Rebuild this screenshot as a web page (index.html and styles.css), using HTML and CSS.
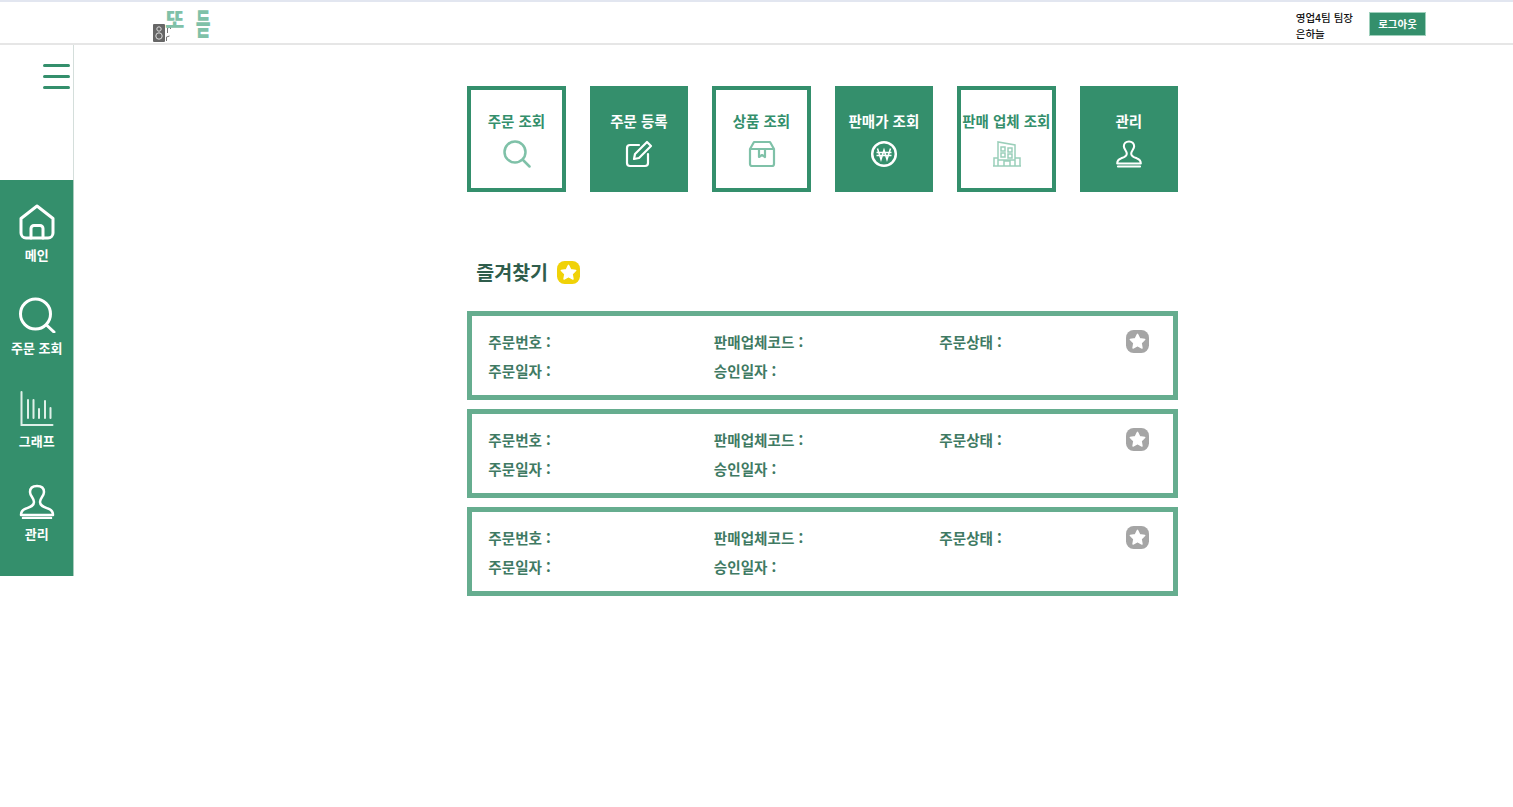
FILE: index.html
```html
<!DOCTYPE html>
<html lang="ko">
<head>
  <meta charset="UTF-8" />
  <title>또듣</title>
  <link rel="stylesheet" href="styles.css">
</head>
<body>
  <header class="topbar">
    <div class="logo">
      <svg class="logo-speaker" width="20" height="18" viewBox="0 0 20 18">
        <rect x="0" y="0" width="12" height="18" rx="1" fill="#666"/>
        <circle cx="6" cy="5" r="2.200" fill="none" stroke="#ddd" stroke-width="1"/>
        <circle cx="6" cy="12" r="3.200" fill="none" stroke="#ddd" stroke-width="1"/>
        <path d="M14.500 9V4l3-1v2M13.500 17v-4l3-1" fill="none" stroke="#777" stroke-width="1"/>
      </svg>
      <span class="logo-a">또</span>
      <span class="logo-b">듣</span>
    </div>
    <div class="user">
      <div class="user-name">영업4팀 팀장<br>은하늘</div>
      <button class="logout-btn">로그아웃</button>
    </div>
  </header>

  <div class="layout">
    <aside class="sidebar">
      <div class="menu-toggle">
        <div class="burger"><span></span><span></span><span></span></div>
      </div>
      <nav class="side-nav">
        <a class="side-item">
          <svg width="38" height="36" viewBox="0 0 38 36" fill="none" stroke="#fff" stroke-width="3" stroke-linejoin="round" stroke-linecap="round">
            <path d="M3 14.500 19 2l16 12.500V29a5 5 0 0 1-5 5H8a5 5 0 0 1-5-5z"/>
            <path d="M13 34V24.500a3 3 0 0 1 3-3h6a3 3 0 0 1 3 3V34"/>
          </svg>
          <span>메인</span>
        </a>
        <a class="side-item">
          <svg width="38" height="36" viewBox="0 0 38 36" fill="none" stroke="#fff" stroke-width="3" stroke-linecap="round">
            <circle cx="17.500" cy="17" r="15"/>
            <path d="M29 28.500l7 6.500"/>
          </svg>
          <span>주문 조회</span>
        </a>
        <a class="side-item">
          <svg width="38" height="36" viewBox="0 0 38 36" fill="none" stroke="#dff0e8" stroke-width="2" stroke-linecap="round">
            <path d="M3.500 2v33h31"/>
            <path d="M10 10v18M15.500 10v18M21 19v9M27 11v17M32.500 18v10"/>
          </svg>
          <span>그래프</span>
        </a>
        <a class="side-item">
          <svg width="38" height="36" viewBox="0 0 38 36" fill="none" stroke="#fff" stroke-width="2.500" stroke-linejoin="round" stroke-linecap="round">
            <path d="M19 3c-4 0-7 2-7 6 0 4 4 6 4 10 0 4-4 5-8 6.500-3 1-5 3-5 6.500h32c0-3.500-2-5.500-5-6.500-4-1.500-8-2.500-8-6.500 0-4 4-6 4-10 0-4-3-6-7-6z"/>
            <path d="M5 35h28"/>
          </svg>
          <span>관리</span>
        </a>
      </nav>
    </aside>

    <main class="content">
      <div class="tiles">
        <a class="tile">
          <span>주문 조회</span>
          <svg width="28" height="28" viewBox="0 0 28 28" fill="none" stroke="#7fc1a8" stroke-width="2.500" stroke-linecap="round">
            <circle cx="12" cy="12" r="10.500"/>
            <path d="M20 20l6.500 6.500"/>
          </svg>
        </a>
        <a class="tile tile-fill">
          <span>주문 등록</span>
          <svg width="28" height="28" viewBox="0 0 28 28" fill="none" stroke="#fff" stroke-width="2.200" stroke-linejoin="round" stroke-linecap="round">
            <path d="M14 5H5a3 3 0 0 0-3 3v15a3 3 0 0 0 3 3h15a3 3 0 0 0 3-3v-9"/>
            <path d="M22 2l4 4-12 12-5 1 1-5z"/>
          </svg>
        </a>
        <a class="tile">
          <span>상품 조회</span>
          <svg width="28" height="28" viewBox="0 0 28 28" fill="none" stroke="#7fc1a8" stroke-width="2.200" stroke-linejoin="round">
            <path d="M2 9l4-7h16l4 7v15a2 2 0 0 1-2 2H4a2 2 0 0 1-2-2z"/>
            <path d="M2 9h24M11 9v8l3-2 3 2V9"/>
          </svg>
        </a>
        <a class="tile tile-fill">
          <span>판매가 조회</span>
          <svg width="28" height="28" viewBox="0 0 28 28" fill="none" stroke="#fff" stroke-width="2.500">
            <circle cx="14" cy="14" r="11.800"/>
            <path stroke-width="1.500" d="M7.500 8.500l3.500 11 3-9.500 3 9.500 3.500-11M6.500 12.500h15M6.500 15.500h15"/>
          </svg>
        </a>
        <a class="tile">
          <span>판매 업체 조회</span>
          <svg width="28" height="28" viewBox="0 0 28 28" fill="none" stroke="#9bcfba" stroke-width="1.500">
            <path d="M5 26V2l17 3v21"/>
            <path d="M1 26V18h4M22 18h5v8M0 26h28M5 20h17M11 26v-5h6v5"/>
            <path d="M8 7h4v4H8zM15 8h4v4h-4zM8 13h4v4H8zM15 14h4v4h-4z"/>
          </svg>
        </a>
        <a class="tile tile-fill">
          <span>관리</span>
          <svg width="28" height="28" viewBox="0 0 38 38" fill="none" stroke="#fff" stroke-width="2.800" stroke-linejoin="round" stroke-linecap="round">
            <path d="M19 2c-4 0-7 2.500-7 6.500 0 4 4 6 4 10 0 4-4 5-8 6.500-3 1-5 3-5 7h32c0-4-2-6-5-7-4-1.500-8-2.500-8-6.500 0-4 4-6 4-10C26 4.500 23 2 19 2z"/>
            <path d="M4 36h30"/>
          </svg>
        </a>
      </div>

      <h2 class="fav-title">
        즐겨찾기
        <svg width="23" height="23" viewBox="0 0 24 24">
          <rect width="24" height="24" rx="8" fill="#f0d208"/>
          <path class="star" d="M12 4.500l2.300 4.700 5.200.8-3.700 3.600.9 5.200L12 16.400l-4.700 2.400.9-5.200L4.500 10l5.200-.8z"/>
        </svg>
      </h2>

      <section class="fav-list">
        <article class="fav-card">
          <div class="fav-grid">
            <span>주문번호 :</span><span>판매업체코드 :</span><span>주문상태 :</span>
            <span>주문일자 :</span><span>승인일자 :</span>
          </div>
          <svg class="fav-star" width="23" height="23" viewBox="0 0 24 24">
            <rect width="24" height="24" rx="8" fill="#a5a5a5"/>
            <path class="star" d="M12 4.500l2.300 4.700 5.200.8-3.700 3.600.9 5.200L12 16.400l-4.700 2.400.9-5.200L4.500 10l5.200-.8z"/>
          </svg>
        </article>
        <article class="fav-card">
          <div class="fav-grid">
            <span>주문번호 :</span><span>판매업체코드 :</span><span>주문상태 :</span>
            <span>주문일자 :</span><span>승인일자 :</span>
          </div>
          <svg class="fav-star" width="23" height="23" viewBox="0 0 24 24">
            <rect width="24" height="24" rx="8" fill="#a5a5a5"/>
            <path class="star" d="M12 4.500l2.300 4.700 5.200.8-3.700 3.600.9 5.200L12 16.400l-4.700 2.400.9-5.200L4.500 10l5.200-.8z"/>
          </svg>
        </article>
        <article class="fav-card">
          <div class="fav-grid">
            <span>주문번호 :</span><span>판매업체코드 :</span><span>주문상태 :</span>
            <span>주문일자 :</span><span>승인일자 :</span>
          </div>
          <svg class="fav-star" width="23" height="23" viewBox="0 0 24 24">
            <rect width="24" height="24" rx="8" fill="#a5a5a5"/>
            <path class="star" d="M12 4.500l2.300 4.700 5.200.8-3.700 3.600.9 5.200L12 16.400l-4.700 2.400.9-5.200L4.500 10l5.200-.8z"/>
          </svg>
        </article>
      </section>
    </main>
  </div>
</body>
</html>
```

FILE: styles.css
```css
* {
  box-sizing: border-box;
}
body {
  margin: 0;
  background-color: #fff;
  font-family: "Noto Sans CJK KR", "Noto Sans", sans-serif;
  font-weight: 700;
}
.topbar {
  height: 45px;
  border-top: 2px solid #e2e6f0;
  border-bottom: 2px solid #e6e6e6;
  display: flex;
  justify-content: space-between;
  align-items: center;
  padding: 0 87px 0 153px;
}
.logo {
  display: flex;
  align-items: flex-start;
  height: 41px;
  color: #7fc1a8;
  position: relative;
  width: 60px;
}
.logo-speaker {
  margin-top: 22px;
}
.logo-a {
  position: absolute;
  left: 12px;
  top: 2px;
  font-size: 21px;
  font-weight: 900;
  line-height: 28px;
}
.logo-b {
  position: absolute;
  left: 41px;
  top: 7px;
  font-size: 20px;
  font-weight: 900;
  line-height: 28px;
  transform: scale(0.8, 1.5);
}
.user {
  display: flex;
  align-items: center;
  gap: 16px;
  padding-top: 2px;
}
.user-name {
  font-size: 10.500px;
  line-height: 16px;
  color: #111;
  font-weight: 500;
  padding-top: 4px;
}
.logout-btn {
  width: 57px;
  height: 24px;
  padding: 0;
  border: 1px solid #9fd0bc;
  background-color: #348f6c;
  color: #fff;
  font: inherit;
  font-size: 10.500px;
}
.layout {
  display: flex;
  align-items: flex-start;
}
.sidebar {
  width: 74px;
  flex-shrink: 0;
}
.menu-toggle {
  height: 135px;
  border-right: 1px solid #d4dedb;
  padding: 19px 2px 0 0;
  display: flex;
  justify-content: flex-end;
}
.burger {
  width: 27px;
  display: flex;
  flex-direction: column;
  gap: 8px;
  margin-right: 1px;
}
.burger span {
  height: 3px;
  border-radius: 2px;
  background-color: #348f6c;
}
.side-nav {
  background-color: #348f6c;
  height: 396px;
  width: 73.500px;
  border-right: 1px solid #a9cdbe;
  padding: 24px 0 0 1px;
  display: flex;
  flex-direction: column;
  gap: 17px;
}
.side-item {
  height: 76px;
  display: flex;
  flex-direction: column;
  align-items: center;
  gap: 6px;
  color: #fff;
  font-size: 13px;
  line-height: 18px;
}
.content {
  width: 710.700px;
  margin-left: 393.300px;
  padding-top: 41px;
}
.tiles {
  display: flex;
  justify-content: space-between;
}
.tile {
  width: 98.400px;
  height: 106px;
  border: 4px solid #348f6c;
  color: #348f6c;
  font-size: 14.500px;
  white-space: nowrap;
  display: flex;
  flex-direction: column;
  align-items: center;
  padding-top: 20px;
  gap: 8px;
}
.tile span {
  line-height: 21px;
}
.tile svg {
  margin: 1px 0 0 1px;
}
.tile-fill {
  background-color: #348f6c;
  color: #fff;
}
.fav-title {
  margin: 65px 0 26px 9px;
  height: 28px;
  display: flex;
  align-items: center;
  gap: 9px;
  font-size: 19.500px;
  font-weight: 700;
  color: #2f5d4c;
}
.fav-title svg {
  margin-top: 3px;
}
.star {
  fill: #fff;
  stroke: #fff;
  stroke-width: 1.500;
  stroke-linejoin: round;
}
.fav-list {
  display: flex;
  flex-direction: column;
  gap: 9px;
}
.fav-card {
  height: 89px;
  border: 5px solid #66ad8f;
  padding: 11px 24px 0 16px;
  display: flex;
  justify-content: space-between;
  align-items: flex-start;
}
.fav-grid {
  display: grid;
  grid-template-columns: 225.500px 225.500px auto;
  grid-auto-rows: 29px;
  align-items: center;
  font-size: 14.600px;
  color: #3f7a63;
}
.fav-star {
  margin-top: 3px;
}
```
